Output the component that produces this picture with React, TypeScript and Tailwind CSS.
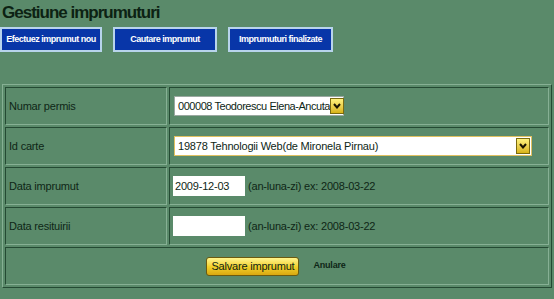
import React from "react";

const Arrow = () => (
  <span className="flex h-[16px] w-[14px] shrink-0 items-center justify-center border border-[#7a6a10] bg-gradient-to-b from-[#fff27a] to-[#d9b412]">
    <svg width="8" height="6" viewBox="0 0 8 6">
      <path d="M1 1 L4 4.5 L7 1" stroke="#1a1400" strokeWidth="2" fill="none" />
    </svg>
  </span>
);

const cell =
  "border border-t-[#244a33] border-l-[#244a33] border-b-[#86b094] border-r-[#86b094] p-0";

export default function App() {
  return (
    <div className="h-[299px] w-[554px] overflow-hidden bg-[#5a8a6a] font-['Liberation_Sans',sans-serif] text-[#0e2616]">
      <div className="pl-[2px] pt-[2px] text-[17px] font-bold leading-[22px] tracking-[-1px] text-[#0c2213]">
        Gestiune imprumuturi
      </div>
      <div className="mt-[3px] flex gap-[11px]">
        <div className="flex h-[25px] w-[102px] items-center justify-center border-2 border-[#b8d4ec] bg-[#0836a8] text-[9px] font-bold tracking-[-0.5px] text-white">
          Efectuez imprumut nou
        </div>
        <div className="flex h-[25px] w-[104px] items-center justify-center border-2 border-[#b8d4ec] bg-[#0836a8] text-[9px] font-bold tracking-[-0.5px] text-white">
          Cautare imprumut
        </div>
        <div className="flex h-[25px] w-[105px] items-center justify-center border-2 border-[#b8d4ec] bg-[#0836a8] text-[9px] font-bold tracking-[-0.5px] text-white">
          Imprumuturi finalizate
        </div>
      </div>
      <div className="mt-[32px] pl-[2px]">
        <table className="w-[550px] border-separate border-spacing-[2px] border border-t-[#86b094] border-l-[#86b094] border-b-[#244a33] border-r-[#244a33] text-[11px] tracking-[-0.2px]">
          <tbody>
            <tr className="h-[38px]">
              <td className={cell + " h-[38px] w-[162px] pl-[3px]"}>Numar permis</td>
              <td className={cell + " h-[38px] pl-[4px]"}>
                <div className="flex h-[20px] w-[170px] items-center justify-between border border-[#9aa8a0] bg-white pl-[3px] pr-[1px]">
                  <span className="whitespace-nowrap tracking-[-0.45px]">000008 Teodorescu Elena-Ancuta</span>
                  <Arrow />
                </div>
              </td>
            </tr>
            <tr className="h-[38px]">
              <td className={cell + " h-[38px] pl-[3px]"}>Id carte</td>
              <td className={cell + " h-[38px] pl-[4px]"}>
                <div className="flex h-[20px] w-[358px] items-center justify-between border border-[#e0c060] bg-white pl-[3px] pr-[1px]">
                  <span className="whitespace-nowrap">19878 Tehnologii Web(de Mironela Pirnau)</span>
                  <Arrow />
                </div>
              </td>
            </tr>
            <tr className="h-[38px]">
              <td className={cell + " h-[38px] pl-[3px]"}>Data imprumut</td>
              <td className={cell + " h-[38px] pl-[3px]"}>
                <div className="flex items-center gap-[3px]">
                  <div className="flex h-[20px] w-[72px] items-center bg-white pl-[2px]">2009-12-03</div>
                  <span>(an-luna-zi) ex: 2008-03-22</span>
                </div>
              </td>
            </tr>
            <tr className="h-[38px]">
              <td className={cell + " h-[38px] pl-[3px]"}>Data resituirii</td>
              <td className={cell + " h-[38px] pl-[3px]"}>
                <div className="flex items-center gap-[3px]">
                  <div className="h-[20px] w-[72px] bg-white" />
                  <span>(an-luna-zi) ex: 2008-03-22</span>
                </div>
              </td>
            </tr>
            <tr className="h-[38px]">
              <td colSpan={2} className={cell + " h-[38px]"}>
                <div className="flex items-center justify-center gap-[14px] pr-[2px]">
                  <div className="flex h-[19px] w-[93px] items-center justify-center rounded-[3px] border border-[#6b5a10] bg-gradient-to-b from-[#fff58a] via-[#f3d22a] to-[#d8a810] text-[11px]">
                    Salvare imprumut
                  </div>
                  <span className="text-[9px] font-bold">Anulare</span>
                </div>
              </td>
            </tr>
          </tbody>
        </table>
      </div>
    </div>
  );
}
